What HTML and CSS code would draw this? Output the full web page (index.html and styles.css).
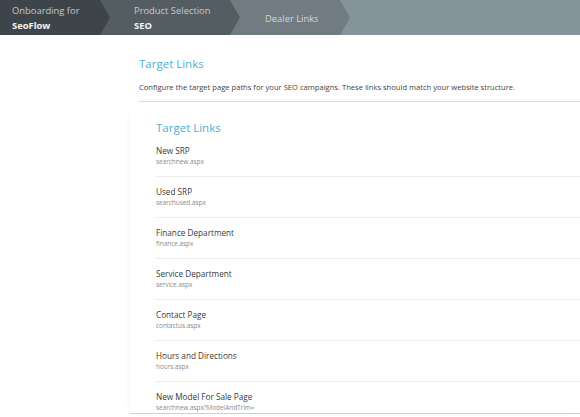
FILE: index.html
```html
<!DOCTYPE html>
<html>
<head>
<meta charset="utf-8">
<link rel="stylesheet" href="styles.css">
</head>
<body>
<div class="crumbs">
  <div class="step s1"><div class="lbl">Onboarding for</div><div class="val">SeoFlow</div></div>
  <div class="step s2"><div class="lbl">Product Selection</div><div class="val">SEO</div></div>
  <div class="step s3"><div class="lbl">Dealer Links</div></div>
</div>
<main class="page">
  <div class="intro">
    <h1 class="title">Target Links</h1>
    <p class="desc">Configure the target page paths for your SEO campaigns. These links should match your website structure.</p>
  </div>
  <section class="card">
    <h2 class="title">Target Links</h2>
    <ul class="links">
      <li class="link"><div class="name">New SRP</div><div class="path">searchnew.aspx</div></li>
      <li class="link"><div class="name">Used SRP</div><div class="path">searchused.aspx</div></li>
      <li class="link"><div class="name">Finance Department</div><div class="path">finance.aspx</div></li>
      <li class="link"><div class="name">Service Department</div><div class="path">service.aspx</div></li>
      <li class="link"><div class="name">Contact Page</div><div class="path">contactus.aspx</div></li>
      <li class="link"><div class="name">Hours and Directions</div><div class="path">hours.aspx</div></li>
      <li class="link"><div class="name">New Model For Sale Page</div><div class="path">searchnew.aspx?ModelAndTrim=</div></li>
    </ul>
  </section>
</main>
</body>
</html>
```
FILE: styles.css
```css
* { box-sizing: border-box; }
html, body { margin: 0; padding: 0; }
body {
  width: 580px;
  height: 417px;
  overflow: hidden;
  background: #fff;
  font-family: "Open Sans", "Liberation Sans", sans-serif;
  color: #444;
}
.crumbs {
  display: flex;
  height: 35px;
  background: #85939a;
}
.step {
  position: relative;
  height: 35px;
  display: flex;
  flex-direction: column;
  justify-content: center;
  padding-top: 1px;
  clip-path: polygon(0 0, calc(100% - 10px) 0, 100% 50%, calc(100% - 10px) 100%, 0 100%);
  font-size: 9.4px;
  line-height: 15px;
  color: #c3c9cc;
}
.s1 { width: 110px; background: #3e454a; padding-left: 12px; z-index: 3; }
.s2 { width: 140px; margin-left: -10px; background: #545d62; padding-left: 34px; z-index: 2; }
.s3 { width: 120px; margin-left: -10px; background: #707c82; padding-left: 35px; z-index: 1; }
.s3 .lbl { color: #d3d8da; }
.val { font-weight: 700; color: #f2f4f5; }

.page {
  padding-left: 130px;
}
.intro {
  padding: 20px 0 0 9px;
}
.title {
  margin: 0;
  font-size: 11.5px;
  line-height: 18px;
  font-weight: 400;
  color: #4fb0d2;
}
.desc {
  margin: 8px 0 0;
  padding-bottom: 8px;
  font-size: 7.6px;
  line-height: 12px;
  color: #444;
  border-bottom: 1px solid #dcdcdc;
}
.card {
  margin-top: 8px;
  padding: 9px 0 0 26px;
  height: 304px;
  overflow: hidden;
  border-bottom: 1px solid #cfcfcf;
  box-shadow: -3px 0 6px -3px rgba(0,0,0,0.06);
}
.links {
  list-style: none;
  margin: 0;
  padding: 0;
}
.link {
  padding: 9px 0 9px;
  border-bottom: 1px solid #ececec;
}
.link:first-child { padding-top: 8px; }
.name {
  font-size: 8.2px;
  line-height: 12px;
  color: #3a3a3a;
}
.path {
  font-size: 6.4px;
  line-height: 10px;
  color: #8a8a8a;
}
```
